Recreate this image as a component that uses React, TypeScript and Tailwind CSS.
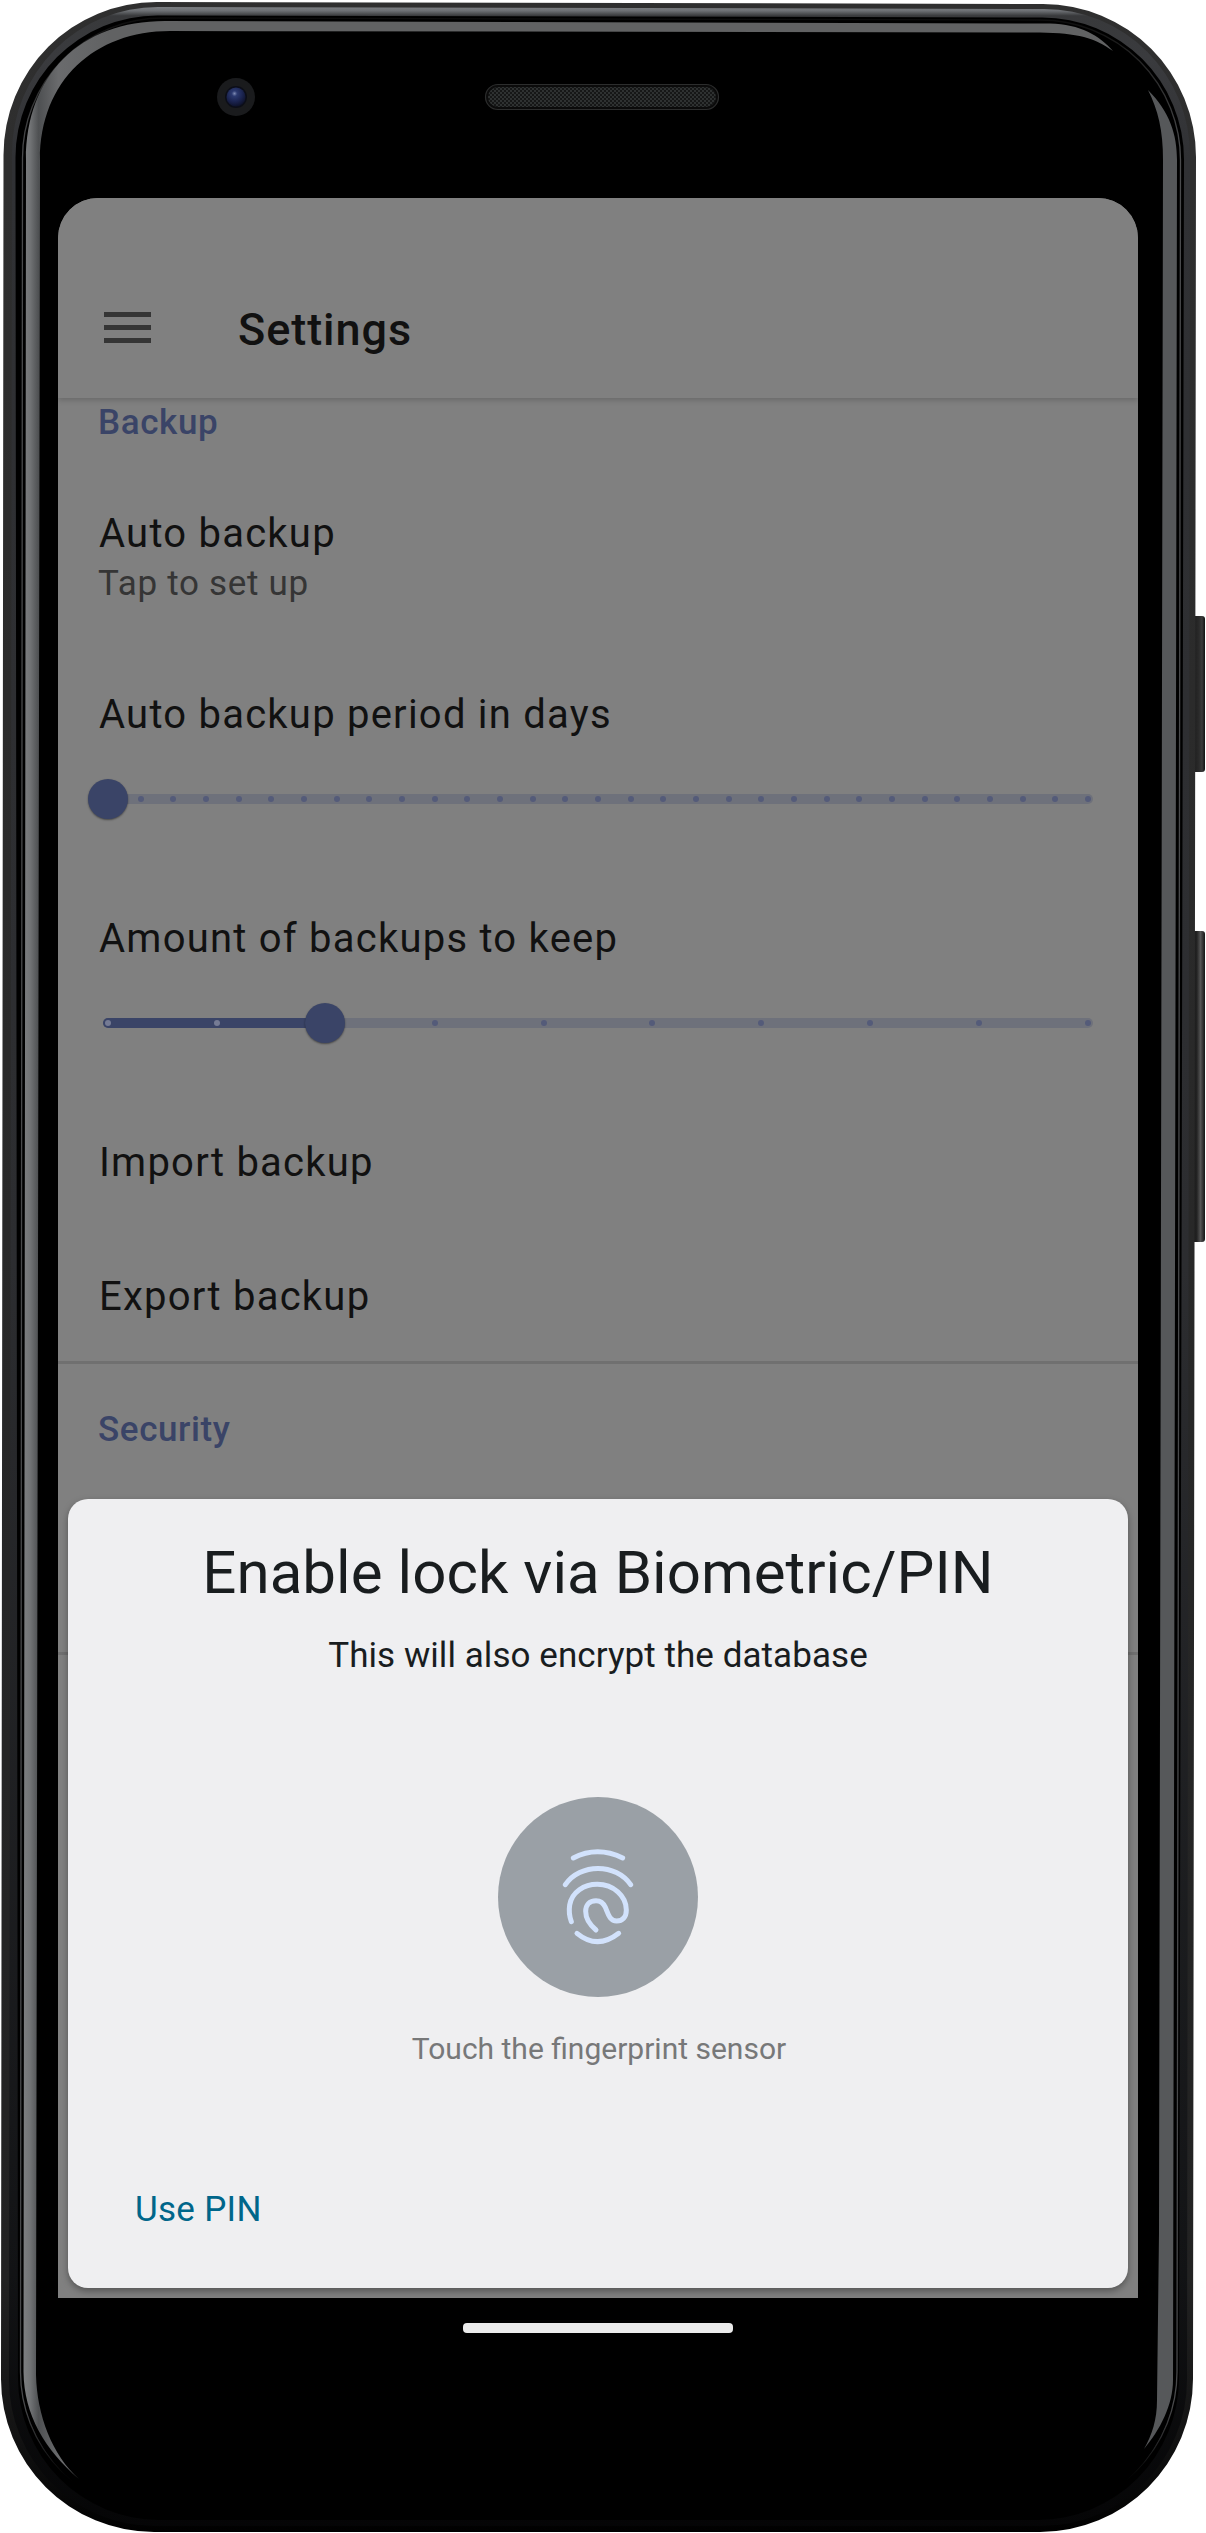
import React from "react";

/** Closed rounded outline of the slightly tapered phone body. */
function outline(
  topLeft: number,
  bottomLeft: number,
  topRight: number,
  bottomRight: number,
  top: number,
  bottom: number,
  r: number,
) {
  return [
    `M${topLeft} ${top + r}`,
    `A${r} ${r} 0 0 1 ${topLeft + r} ${top}`,
    `L${topRight - r} ${top + 2}`,
    `A${r} ${r} 0 0 1 ${topRight} ${top + 2 + r}`,
    `L${bottomRight} ${bottom - r}`,
    `A${r} ${r} 0 0 1 ${bottomRight - r} ${bottom}`,
    `L${bottomLeft + r} ${bottom}`,
    `A${r} ${r} 0 0 1 ${bottomLeft} ${bottom - r}`,
    "Z",
  ].join(" ");
}

function PhoneBody() {
  return (
    <svg className="absolute inset-0" width="1206" height="2533" viewBox="0 0 1206 2533" aria-hidden="true">
      <defs>
        <linearGradient id="shell" gradientUnits="userSpaceOnUse" x1="0" y1="0" x2="0" y2="2533">
          <stop offset="0" stopColor="#2f2f2f" />
          <stop offset="0.9" stopColor="#222" />
          <stop offset="0.96" stopColor="#131313" />
          <stop offset="1" stopColor="#000" />
        </linearGradient>
        <linearGradient id="rim" gradientUnits="userSpaceOnUse" x1="0" y1="7" x2="0" y2="2527">
          <stop offset="0" stopColor="#7d8084" />
          <stop offset="0.0015" stopColor="#6d7074" />
          <stop offset="0.0035" stopColor="#38393b" />
          <stop offset="0.02" stopColor="#3a3b3e" />
          <stop offset="0.06" stopColor="#303134" />
          <stop offset="0.5" stopColor="#2c2d30" />
          <stop offset="0.9" stopColor="#121315" />
          <stop offset="1" stopColor="#050506" />
        </linearGradient>
        <linearGradient id="line" gradientUnits="userSpaceOnUse" x1="0" y1="0" x2="0" y2="2533">
          <stop offset="0" stopColor="#000" />
          <stop offset="0.02" stopColor="#222" />
          <stop offset="0.06" stopColor="#4a4b4d" />
          <stop offset="0.95" stopColor="#48494b" />
          <stop offset="0.98" stopColor="#000" />
        </linearGradient>
        <linearGradient id="glareLeft" gradientUnits="userSpaceOnUse" x1="24" y1="0" x2="110" y2="0">
          <stop offset="0" stopColor="#7c7e80" />
          <stop offset="0.07" stopColor="#727476" />
          <stop offset="0.17" stopColor="#4e5052" />
          <stop offset="0.4" stopColor="#6a6b6d" />
          <stop offset="1" stopColor="#616263" />
        </linearGradient>
        <linearGradient id="key" x1="0" y1="0" x2="1" y2="0">
          <stop offset="0" stopColor="#161616" />
          <stop offset="0.6" stopColor="#2a2a2a" />
          <stop offset="0.8" stopColor="#3a3a3a" />
          <stop offset="1" stopColor="#111" />
        </linearGradient>
        <linearGradient id="keyBright" x1="0" y1="0" x2="1" y2="0">
          <stop offset="0" stopColor="#141414" />
          <stop offset="0.45" stopColor="#222" />
          <stop offset="0.7" stopColor="#555" />
          <stop offset="1" stopColor="#151515" />
        </linearGradient>
        <radialGradient id="lens" cx="0.42" cy="0.32" r="0.7">
          <stop offset="0" stopColor="#7f8bb4" />
          <stop offset="0.2" stopColor="#2c3a70" />
          <stop offset="0.6" stopColor="#1b2450" />
          <stop offset="1" stopColor="#0d1128" />
        </radialGradient>
        <pattern id="mesh" width="4" height="4" patternUnits="userSpaceOnUse">
          <rect width="4" height="4" fill="#161717" />
          <circle cx="1" cy="1" r="0.9" fill="#3a3d3e" />
          <circle cx="3" cy="3" r="0.9" fill="#3a3d3e" />
        </pattern>
      </defs>

      <rect x="1190" y="616" width="15" height="156" rx="3" fill="url(#key)" />
      <rect x="1190" y="931" width="15" height="311" rx="3" fill="url(#keyBright)" />

      <path d={outline(3.5, 1, 1196, 1193, 2, 2532, 153)} fill="url(#shell)" />
      <path d={outline(12, 9, 1190, 1187, 7, 2526, 146)} fill="url(#rim)" />
      <path d={outline(15.5, 18, 1184, 1179, 15.5, 2520, 142)} fill="#000" />
      <path d={outline(22.5, 20.5, 1180.5, 1177, 18, 2512, 140)} fill="none" stroke="url(#line)" strokeWidth="1.3" />
      <path d={outline(24.5, 22.5, 1178.5, 1175, 20, 2514, 140)} fill="#000" />

      <path
        d="M79 2479C45 2450 24 2415 23.5 2372L26 160C26 75 80 21 165 21L1050 23.5C1080 24 1100 36 1113 51C1095 38 1078 33 1040 32.5L170 31C95 31 40 80 40 160L36 2375C37 2415 52 2455 79 2479Z"
        fill="url(#glareLeft)"
      />
      <path
        d="M1148 90C1170 112 1177 135 1177 160L1173 2380C1173 2405 1160 2430 1144 2449C1152 2435 1157 2420 1157 2400L1159 2233L1163 160C1163 130 1158 110 1148 90Z"
        fill="#56585a"
      />

      <circle cx="236" cy="97" r="19" fill="#1a1b1d" />
      <circle cx="236" cy="97" r="11" fill="#0c0e18" />
      <circle cx="236" cy="97" r="9.5" fill="url(#lens)" />

      <rect x="485.5" y="84.5" width="233" height="25" rx="12.5" fill="#0b0b0b" stroke="#2c2d2d" strokeWidth="1.2" />
      <rect x="488" y="87" width="228" height="20" rx="10" fill="url(#mesh)" />
    </svg>
  );
}

function Slider({ steps, value }: { steps: number; value: number }) {
  const ticks = Array.from({ length: steps + 1 }, (_, i) => i);
  return (
    <div className="relative mx-[45px] mt-10 flex h-10 items-center">
      <div className="h-[10px] w-full rounded-full bg-[#6e717b]" />
      <div
        className="absolute left-0 h-[10px] rounded-full bg-[#3a4467]"
        style={{ width: 10 + (980 * value) / steps }}
      />
      {ticks.map((i) => (
        <span
          key={i}
          className={`absolute size-[6px] rounded-full ${i < value ? "bg-[#757b94]" : "bg-[#545b79]"}`}
          style={{ left: 2 + (980 * i) / steps }}
        />
      ))}
      <span
        className="absolute size-10 rounded-full bg-[#3a4467] shadow-[0_1px_2px_rgba(0,0,0,0.45)]"
        style={{ left: Math.floor(-15 + (980 * value) / steps) }}
      />
    </div>
  );
}

function SectionTitle({ children, className }: { children: string; className: string }) {
  return (
    <h2 className={`px-10 text-[35px] leading-[42px] font-medium tracking-[0.6px] text-[#3a4467] ${className}`}>
      {children}
    </h2>
  );
}

function Item({ title, className }: { title: string; className: string }) {
  return <p className={`px-[41px] text-[40px] leading-[48px] tracking-[1.23px] text-[#111] ${className}`}>{title}</p>;
}

function Fingerprint() {
  return (
    <svg
      className="size-[200px] rounded-full bg-[#9aa0a6]"
      viewBox="54 81 600 600"
      fill="none"
      stroke="#d2e2fc"
      strokeWidth="15"
      strokeLinecap="round"
      strokeLinejoin="round"
      aria-hidden="true"
    >
      <path d="M280 264Q352 227 428 264" />
      <path d="M256 344C300 279 408 279 452 344" />
      <path d="M274 455C267 436 267 418 269 405C276 366 312 343 352 343C400 343 439 378 439 420C439 442 427 453 410 453C388 453 384 430 376 412C370 398 362 392 348 392C328 392 317 405 317 424C317 448 330 465 348 480" />
      <path d="M291 490Q352 540 416 490" />
    </svg>
  );
}

function BiometricSheet() {
  return (
    <section className="absolute top-[1301px] left-[10px] flex h-[789px] w-[1060px] flex-col items-center rounded-[20px] bg-[#efeff1] shadow-[0_3px_7px_rgba(0,0,0,0.35)]">
      <h1 className="mt-[38px] text-[60px] leading-[72px] tracking-[0.05px] text-[#191d1f]">
        Enable lock via Biometric/PIN
      </h1>
      <p className="mt-[26px] text-[35px] leading-[42px] tracking-[0.06px] text-[#191d1f]">
        This will also encrypt the database
      </p>
      <div className="mt-[120px]">
        <Fingerprint />
      </div>
      <p className="mt-[34px] ml-[2px] text-[30px] leading-9 text-[#777879]">Touch the fingerprint sensor</p>
      <button className="mt-[122px] ml-[67px] self-start text-[35px] leading-[42px] tracking-[0.3px] text-[#00668a]">
        Use PIN
      </button>
    </section>
  );
}

export default function App() {
  return (
    <div className="relative h-[2533px] w-[1206px] overflow-hidden bg-white pt-[198px] pl-[58px] font-['Roboto',sans-serif]">
      <PhoneBody />
      <main className="relative flex h-[2160px] w-[1080px] flex-col overflow-hidden rounded-t-[40px] bg-black">
        <div className="h-[2100px] bg-[#808080]">
          <header className="relative flex h-[200px] bg-[#808080] shadow-[0_2px_6px_rgba(0,0,0,0.2)]">
            <div className="mt-[114px] ml-[46px] flex h-[31px] w-[47px] flex-col justify-between">
              <span className="h-[5px] bg-[#353535]" />
              <span className="h-[5px] bg-[#353535]" />
              <span className="h-[5px] bg-[#353535]" />
            </div>
            <h1 className="mt-[105px] ml-[87px] text-[45px] leading-[54px] font-medium tracking-[0.95px] text-[#111]">
              Settings
            </h1>
          </header>

          <SectionTitle className="mt-1">Backup</SectionTitle>
          <Item title="Auto backup" className="mt-[66px]" />
          <p className="mt-[5px] px-10 text-[35px] leading-[42px] tracking-[0.7px] text-[#353535]">Tap to set up</p>
          <Item title="Auto backup period in days" className="mt-[86px]" />
          <Slider steps={30} value={0} />
          <Item title="Amount of backups to keep" className="mt-24" />
          <Slider steps={9} value={2} />
          <Item title="Import backup" className="mt-24" />
          <Item title="Export backup" className="mt-[86px]" />
          <hr className="mt-10 h-[3px] border-0 bg-[#707070]" />
          <SectionTitle className="mt-[45px]">Security</SectionTitle>
          <hr className="mt-[201px] h-[3px] border-0 bg-[#707070]" />
        </div>
        <div className="flex h-[60px] items-start justify-center pt-[25px]">
          <span className="h-[10px] w-[270px] rounded-[4px] bg-[#ebebeb]" />
        </div>
        <BiometricSheet />
      </main>
    </div>
  );
}
